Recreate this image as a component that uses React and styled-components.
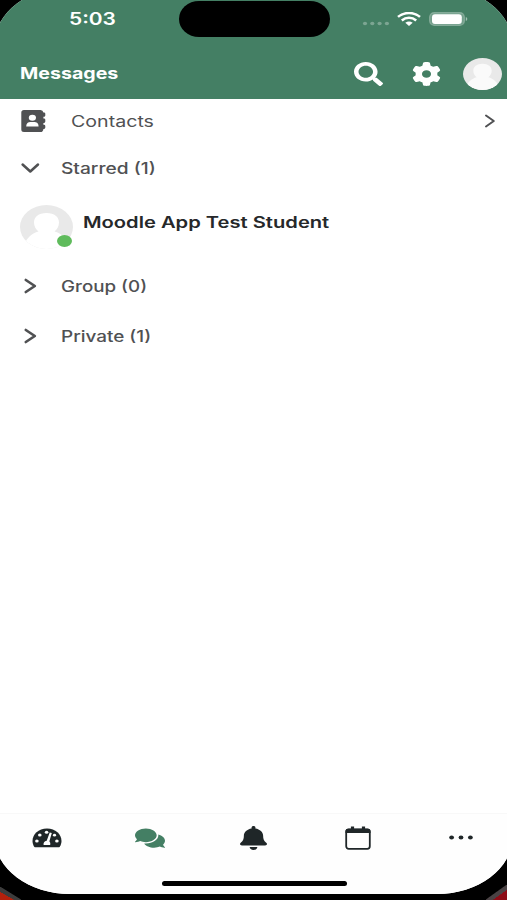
import React from 'react'
import styled, {createGlobalStyle} from 'styled-components'
import {FaBell, FaComments, FaSearch} from 'react-icons/fa'
import {FaGear} from 'react-icons/fa6'


const colors = {
  brand: '#447f64',
  ink: '#1f2628',
  name: '#26282a',
  text: '#505153',
  placeholder: '#e9e9e9',
  online: '#5fbb5c',
}

const GlobalStyle = createGlobalStyle`
  body {
    margin: 0;
    background: #000;
    font-family: Inter, 'Liberation Sans', sans-serif;
  }
`

const Stage = styled.div`
  width: 507px;
  height: 900px;
  overflow: hidden;
  background:
    linear-gradient(to top right, #b3200c 50%, transparent 52%) left bottom / 14px 8px no-repeat,
    linear-gradient(to top left, #8d0c16 50%, transparent 52%) right bottom / 14px 10px no-repeat,
    linear-gradient(to top right, #3c3c3c 50%, transparent 54%) left bottom / 21px 13px no-repeat,
    linear-gradient(to top left, #4a4244 50%, transparent 54%) right bottom / 21px 15px no-repeat,
    #000;
`

// the screen is a little larger than the stage, its corners are cut by the edges
const Screen = styled.div`
  box-sizing: border-box;
  display: flex;
  flex-direction: column;
  width: 517px;
  height: 907px;
  margin: -13px -5px 0;
  border-radius: 75px / 56px;
  overflow: hidden;
  background: #fff;
`

const Header = styled.header`
  position: relative;
  box-sizing: border-box;
  height: 112px;
  padding: 13px 10px 0 25px;
  background: ${colors.brand};
  color: #fff;
`

const Island = styled.div`
  position: absolute;
  top: 14px;
  left: 184px;
  width: 151px;
  height: 36px;
  border-radius: 20px / 18px;
  background: #000;
`

const StatusBar = styled.div`
  display: flex;
  align-items: center;
  justify-content: space-between;
  height: 37px;
  padding: 0 34px 0 49px;
`

const StatusIcons = styled.div`
  display: flex;
  align-items: center;
  gap: 7px;
`

const TitleBar = styled.div`
  display: flex;
  align-items: center;
  justify-content: space-between;
  height: 74px;
`

const Actions = styled.div`
  display: flex;
  align-items: center;
  gap: 22px;
`

const Label = styled.span`
  display: inline-block;
  transform: scaleX(${({$stretch}) => $stretch || 1.23});
  transform-origin: left center;
  color: ${({$color}) => $color || 'inherit'};
  font-size: ${({$size}) => $size || 15.5}px;
  font-weight: ${({$weight}) => $weight || 400};
  line-height: 20px;
  white-space: nowrap;
`

const Icon = styled.span`
  display: flex;
  flex: none;
  width: ${({$w}) => $w}px;
  height: ${({$h}) => $h}px;
  margin: ${({$m}) => $m || 0};
  color: ${({$color}) => $color || 'inherit'};

  svg {
    width: 100%;
    height: 100%;
  }
`

const List = styled.main`
  flex: 1;
`

const Row = styled.div`
  box-sizing: border-box;
  display: flex;
  align-items: center;
  height: ${({$h}) => $h || 50}px;
  padding: 1px 17px 0 26px;
  color: ${colors.text};
`

const Lead = styled.div`
  box-sizing: border-box;
  display: flex;
  flex: none;
  width: ${({$w}) => $w || 40}px;
  padding-bottom: 2px;
`

const Trail = styled.div`
  margin-left: auto;
  padding-bottom: 1px;
`

const Member = styled.div`
  box-sizing: border-box;
  display: flex;
  align-items: flex-start;
  gap: 10px;
  height: 68px;
  padding: 12px 0 0 25px;
`

const MemberName = styled.div`
  padding-top: 7px;
`

const AvatarWrap = styled.div`
  position: relative;
  width: 53px;
  height: 44px;
`

const OnlineDot = styled.span`
  position: absolute;
  right: 1px;
  bottom: 2px;
  width: 15px;
  height: 12px;
  border-radius: 50%;
  background: ${colors.online};
`

const TabBar = styled.nav`
  box-sizing: border-box;
  display: grid;
  grid-template-columns: repeat(5, 103.6px);
  height: 50px;
  padding: 0 0 2px;
  border-top: 1px solid #f8f8f8;
  background: #fefefe;
  color: ${colors.ink};
`

const Tab = styled.div`
  display: flex;
  align-items: center;
  justify-content: center;
`

const HomeArea = styled.div`
  display: flex;
  justify-content: center;
  height: 31px;
  padding-left: 1px;
  background: #fefefe;
`

const HomeIndicator = styled.div`
  width: 185px;
  height: 5px;
  margin-top: 18px;
  border-radius: 3px;
  background: #000;
`

const Avatar = ({person = '#fff'}) => (
  <svg viewBox='0 0 53 44' width='100%' height='100%' preserveAspectRatio='none'>
    <defs>
      <clipPath id='avatarClip'>
        <ellipse cx='26.5' cy='22' rx='26.5' ry='22'/>
      </clipPath>
    </defs>
    <g clipPath='url(#avatarClip)'>
      <rect width='53' height='44' fill={colors.placeholder}/>
      <path
        fill={person}
        d='M26.5 8C18.500 8 14 12 14 17.500C14 21.500 16 24.500 18.500 26.500C14 27.500 8 31.500 5.500 37L4 44H49L47.500 37C45 31.500 39 27.500 34.500 26.500C37 24.500 39 21.500 39 17.500C39 12 34.500 8 26.500 8Z'
      />
    </g>
  </svg>
)

const Signal = () => (
  <svg viewBox='0 0 28 5' fill='#fff' fillOpacity='.3'>
    {[3, 10.3, 17.6, 24.9].map(x => <ellipse key={x} cx={x} cy='2.5' rx='2.1' ry='1.8'/>)}
  </svg>
)

const Wifi = () => (
  <svg viewBox='0 0 24 14' fill='none' stroke='#fff' strokeWidth='2.5'>
    <path d='M1 4.900C7 -.300 17 -.300 23 4.900'/>
    <path d='M4.800 8.500C9 4.900 15 4.900 19.200 8.500'/>
    <path d='M8.300 10.800Q12 8.200 15.700 10.800L12 14Z' fill='#fff' stroke='none'/>
  </svg>
)

const Battery = () => (
  <svg viewBox='0 0 39 14'>
    <rect x='.6' y='.6' width='34.800' height='12.800' rx='4.500' fill='#fff' fillOpacity='.25' stroke='#fff' strokeOpacity='.25' strokeWidth='1.200'/>
    <rect x='3' y='2.300' width='29.800' height='9.600' rx='3' fill='#fff'/>
    <path d='M36.800 5V9C38.800 8.300 38.800 5.700 36.800 5Z' fill='#fff' fillOpacity='.5'/>
  </svg>
)

const AddressBook = () => (
  <svg viewBox='0 0 25 22' fill='currentColor'>
    <path d='M3 0H19.500Q22 0 22.400 2.500H23Q24.300 2.500 24.300 3.800V5.400Q24.300 6.700 23 6.700H22.400V8.500H23Q24.300 8.500 24.300 9.800V11.600Q24.300 12.900 23 12.900H22.400V14.700H23Q24.300 14.700 24.300 16V17.600Q24.300 18.900 23 18.900H22.400Q22.200 22 19.500 22H3Q.3 22 .3 19.500V2.500Q.3 0 3 0Z'/>
    <ellipse cx='11.400' cy='7.700' rx='3.600' ry='3' fill='#fff'/>
    <path d='M5.200 16.600C5.200 13.500 7 12.100 9.500 12.100H13.300C15.800 12.100 17.600 13.500 17.600 16.600Z' fill='#fff'/>
  </svg>
)

const Chevron = ({d, weight = 2.5}) => (
  <svg viewBox='0 0 20 16' fill='none' stroke='currentColor' strokeWidth={weight} strokeLinecap='round' strokeLinejoin='round'>
    <path d={d}/>
  </svg>
)

const Gauge = () => (
  <svg viewBox='0 0 30 20'>
    <path d='M15 .5C6.500 .5 .5 6.300 .5 13C.5 15.200 1.200 17.200 2.200 18.700Q2.700 19.300 3.600 19.300H26.400Q27.300 19.300 27.800 18.700C28.800 17.200 29.500 15.200 29.500 13C29.500 6.300 23.500 .5 15 .5Z' fill='currentColor'/>
    <g fill='#fefefe'>
      <ellipse cx='14.600' cy='4.300' rx='1.800' ry='1.500'/>
      <ellipse cx='7.800' cy='7' rx='1.800' ry='1.500'/>
      <ellipse cx='4.900' cy='13' rx='1.800' ry='1.500'/>
      <ellipse cx='24.900' cy='13' rx='1.800' ry='1.500'/>
      <ellipse cx='22.500' cy='7.200' rx='1.600' ry='1.400'/>
      <path d='M17.700 4.500L19.800 5L17.400 13.300Q18.800 14.700 18.200 17H11.600Q11 13.500 14.700 12.700Z'/>
    </g>
  </svg>
)

const Calendar = () => (
  <svg viewBox='0 0 26 24' fill='none'>
    <rect x='1.200' y='3.500' width='23.600' height='19.300' rx='2.500' stroke='currentColor' strokeWidth='1.800'/>
    <path d='M.5 7V5.500Q.5 2.700 3.500 2.700H22.500Q25.500 2.700 25.500 5.500V7Z' fill='currentColor'/>
    <path d='M7.500 .5V4M18.500 .5V4' stroke='currentColor' strokeWidth='3.200'/>
  </svg>
)

const Ellipsis = () => (
  <svg viewBox='0 0 24 5' fill='currentColor'>
    {[2.6, 12, 21.4].map(x => <ellipse key={x} cx={x} cy='2.5' rx='2.4' ry='2.1'/>)}
  </svg>
)

const tabs = [
  {name: 'dashboard', icon: Gauge, w: 30, h: 20},
  {name: 'messages', icon: FaComments, w: 30, h: 22, color: colors.brand},
  {name: 'notifications', icon: FaBell, w: 27, h: 24},
  {name: 'calendar', icon: Calendar, w: 26, h: 24},
  {name: 'more', icon: Ellipsis, w: 24, h: 5},
]

const Group = ({title, open, stretch}) => (
  <Row>
    <Lead>
      {open ?
        <Icon $w={20} $h={16} $m='0 0 0 -1px'><Chevron d='M2.600 4.500L10.300 11.500L18 4.500'/></Icon> :
        <Icon $w={20} $h={16} $m='0 0 0 -1px'><Chevron d='M5.800 2L14.800 8L5.800 14' weight={2.7}/></Icon>}
    </Lead>
    <Label $weight={500} $stretch={stretch}>{title}</Label>
  </Row>
)

const App = () => (
  <Stage>
    <GlobalStyle/>
    <Screen>
      <Header>
        <Island/>
        <StatusBar>
          <Label $size={17} $weight={600}>5:03</Label>
          <StatusIcons>
            <Icon $w={28} $h={5} $m='9px 0 0'><Signal/></Icon>
            <Icon $w={24} $h={14} $m='0 1px 0 0'><Wifi/></Icon>
            <Icon $w={39} $h={14}><Battery/></Icon>
          </StatusIcons>
        </StatusBar>
        <TitleBar>
          <Label $weight={700} $stretch={1.265}>Messages</Label>
          <Actions>
            <Icon $w={29} $h={24} $m='0 7px 0 0'><FaSearch preserveAspectRatio='none'/></Icon>
            <Icon $w={29} $h={24}><FaGear preserveAspectRatio='none'/></Icon>
            <Icon $w={39} $h={32}><Avatar person='#fafafa'/></Icon>
          </Actions>
        </TitleBar>
      </Header>
      <List>
        <Row $h={44}>
          <Lead $w={50}>
            <Icon $w={25} $h={22}><AddressBook/></Icon>
          </Lead>
          <Label $stretch={1.265}>Contacts</Label>
          <Trail>
            <Icon $w={20} $h={16} $m='0 -5px 0 0'><Chevron d='M6 2.500L13.800 8L6 13.500' weight={2}/></Icon>
          </Trail>
        </Row>
        <Group title='Starred (1)' open stretch={1.235}/>
        <Member>
          <AvatarWrap>
            <Avatar/>
            <OnlineDot/>
          </AvatarWrap>
          <MemberName>
            <Label $weight={600} $stretch={1.3} $color={colors.name}>Moodle App Test Student</Label>
          </MemberName>
        </Member>
        <Group title='Group (0)' stretch={1.21}/>
        <Group title='Private (1)' stretch={1.22}/>
      </List>
      <TabBar>
        {tabs.map(({name, icon: Glyph, w, h, color}) => (
          <Tab key={name}>
            <Icon $w={w} $h={h} $color={color}><Glyph preserveAspectRatio='none'/></Icon>
          </Tab>
        ))}
      </TabBar>
      <HomeArea>
        <HomeIndicator/>
      </HomeArea>
    </Screen>
  </Stage>
)

export default App
